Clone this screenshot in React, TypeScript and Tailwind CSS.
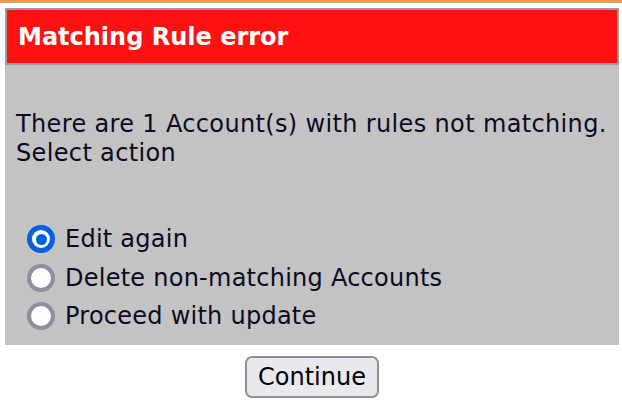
import { useState } from "react";

const options = [
  { id: "edit", label: "Edit again" },
  { id: "delete", label: "Delete non-matching Accounts" },
  { id: "proceed", label: "Proceed with update" },
];

function Radio({ checked }: { checked: boolean }) {
  if (checked) {
    return (
      <span className="flex h-[28px] w-[28px] shrink-0 items-center justify-center rounded-full bg-[#0060df]">
        <span className="flex h-[18px] w-[18px] items-center justify-center rounded-full bg-white">
          <span className="h-[11px] w-[11px] rounded-full bg-[#0060df]" />
        </span>
      </span>
    );
  }
  return <span className="h-[28px] w-[28px] shrink-0 rounded-full border-4 border-[#8f8f9d] bg-white" />;
}

export default function App() {
  const [choice, setChoice] = useState("edit");

  return (
    <div className="h-[412px] w-[622px] bg-white font-['DejaVu_Sans',Verdana,sans-serif] text-[#000]">
      {/* top stripe */}
      <div className="h-[2px] bg-[#f29b3c]" />
      <div className="h-[1px] bg-[#b4b4b4]" />

      <div className="mx-[5px] mt-[5px] w-[614px]">
        {/* Title bar */}
        <div className="flex h-[57px] items-center border-2 border-[#9c9c9c] bg-[#ff1111] pl-[11px]">
          <h1 className="text-[24px] font-bold text-white">Matching Rule error</h1>
        </div>

        {/* Body */}
        <div className="bg-[#c3c3c3] pb-[9px] pl-[11px] pt-[45px]">
          <p className="whitespace-nowrap text-[24px] leading-[29px] tracking-[0.35px] text-[#0a0a1e]">
            There are 1 Account(s) with rules not matching.
            <br />
            Select action
          </p>

          <div className="mt-[52px] flex flex-col pl-[11px]">
            {options.map((o) => (
              <label
                key={o.id}
                className="flex h-[38.5px] cursor-pointer items-center gap-[10px] text-[24px] tracking-[0.25px] text-[#0a0a1e]"
                onClick={() => setChoice(o.id)}
              >
                <Radio checked={choice === o.id} />
                <span>{o.label}</span>
              </label>
            ))}
          </div>
        </div>

        {/* Continue */}
        <div className="flex justify-center pt-[11px]">
          <button className="h-[42px] w-[134px] rounded-[7px] border-2 border-[#8f8f9d] bg-[#e9e9ed] text-[24px] text-black">
            Continue
          </button>
        </div>
      </div>
    </div>
  );
}
